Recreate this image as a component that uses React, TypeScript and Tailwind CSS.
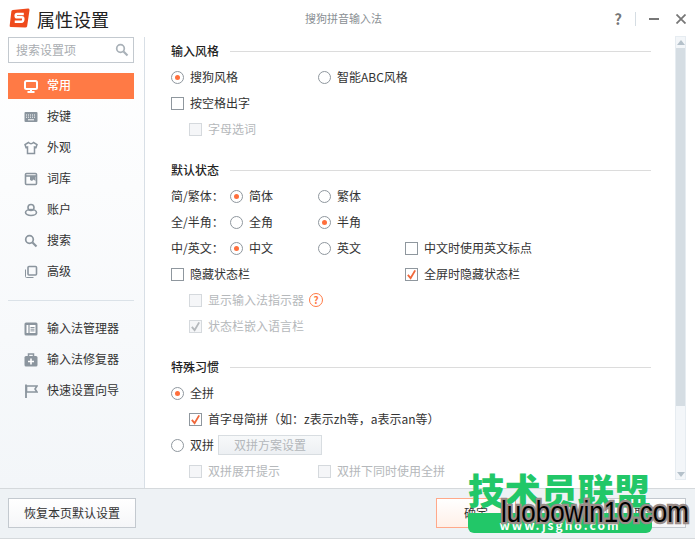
import type { ReactNode } from "react";

function Radio({ on = false }: { on?: boolean }) {
  return (
    <span className="flex h-[13px] w-[13px] shrink-0 items-center justify-center rounded-full border border-[#8f979e] bg-white">
      {on && <span className="h-[5px] w-[5px] rounded-full bg-[#ff6f3c]" />}
    </span>
  );
}

function Check({ on = false, off = false }: { on?: boolean; off?: boolean }) {
  return (
    <span
      className={`flex h-[13px] w-[13px] shrink-0 items-center justify-center border ${
        off ? "border-[#d5d9dd] bg-[#f5f6f8]" : "border-[#8f979e] bg-white"
      }`}
    >
      {on && (
        <svg viewBox="0 0 12 12" className="h-[11px] w-[11px]">
          <path d="M2 6.5 L5 10 L10 1.5" fill="none" stroke={off ? "#b4b8bc" : "#f0673a"} strokeWidth="2" />
        </svg>
      )}
    </span>
  );
}

function RadioOpt({ on, label, w }: { on?: boolean; label: string; w: string }) {
  return (
    <div className={`flex items-center gap-[6px] ${w}`}>
      <Radio on={on} />
      <span>{label}</span>
    </div>
  );
}

function CheckOpt({ on, off, label, w }: { on?: boolean; off?: boolean; label: string; w?: string }) {
  return (
    <div className={`flex items-center gap-[6px] ${w ?? ""} ${off ? "text-[#b5b8bb]" : ""}`}>
      <Check on={on} off={off} />
      <span>{label}</span>
    </div>
  );
}

function Row({ children, indent }: { children: ReactNode; indent?: string }) {
  return <div className={`flex h-[26px] items-center ${indent ?? ""}`}>{children}</div>;
}

function Heading({ title }: { title: string }) {
  return (
    <div className="flex h-[26px] items-center gap-[11px] font-medium text-[#222]">
      <span>{title}</span>
      <span className="h-px flex-1 bg-[#dcdcdc]" />
    </div>
  );
}

function NavIcon({ name, color = "#8b959e" }: { name: string; color?: string }) {
  const shapes: Record<string, ReactNode> = {
    monitor: (
      <>
        <rect x="1" y="2" width="12" height="8" rx="1.5" fill="none" stroke={color} strokeWidth="2" />
        <path d="M7 10v2M3.5 13h7" stroke={color} strokeWidth="2" />
      </>
    ),
    keyboard: (
      <>
        <rect x="0.5" y="2" width="13" height="10" rx="1" fill={color} />
        <path d="M2 5h10M2 7.2h10" stroke="#fff" strokeWidth="1" strokeDasharray="1 1" />
        <path d="M4 9.8h6" stroke="#fff" strokeWidth="1" />
      </>
    ),
    shirt: (
      <path
        d="M4.5 1.5 L1 3.5 L2 6.5 L3.5 6 V12.5 H10.5 V6 L12 6.5 L13 3.5 L9.5 1.5 Q7 4 4.5 1.5Z"
        fill="none"
        stroke={color}
        strokeWidth="1.5"
      />
    ),
    book: (
      <>
        <rect x="1.5" y="1.5" width="11" height="11" rx="1" fill="none" stroke={color} strokeWidth="1.6" />
        <path d="M1.5 4h11" stroke={color} strokeWidth="1.6" />
        <path d="M6 4h5.5v5l-2-1.5-1.5 1.5-2-1z" fill={color} />
      </>
    ),
    user: (
      <>
        <circle cx="7" cy="4.5" r="3" fill="none" stroke={color} strokeWidth="1.6" />
        <ellipse cx="7" cy="9.5" rx="5.5" ry="3" fill="none" stroke={color} strokeWidth="1.6" />
      </>
    ),
    search: (
      <>
        <circle cx="5.5" cy="5.5" r="3.8" fill="none" stroke={color} strokeWidth="1.7" />
        <path d="M8.5 8.5 L12.5 12.5" stroke={color} strokeWidth="2.2" />
      </>
    ),
    copy: (
      <>
        <rect x="4" y="1.5" width="8.5" height="8.5" rx="1" fill="none" stroke={color} strokeWidth="1.6" />
        <path d="M1.5 4.5v7a1 1 0 0 0 1 1h7" fill="none" stroke={color} strokeWidth="1" />
      </>
    ),
    manager: (
      <>
        <rect x="0.5" y="0.5" width="13" height="13" rx="1.5" fill={color} />
        <rect x="2.5" y="3" width="9" height="8" fill="#fff" />
        <path d="M5 3v8" stroke={color} strokeWidth="1.2" />
        <path d="M6.5 5.5h4M6.5 7.2h4M6.5 8.9h4" stroke={color} strokeWidth="1" />
      </>
    ),
    repair: (
      <>
        <rect x="0.5" y="3" width="13" height="10.5" rx="1.5" fill={color} />
        <path d="M4.5 3V1h5v2" fill="none" stroke={color} strokeWidth="1.5" />
        <path d="M7 5.5v6M4 8.5h6" stroke="#fff" strokeWidth="1.6" />
      </>
    ),
    flag: (
      <>
        <path d="M2 0.5V14" stroke={color} strokeWidth="1.8" />
        <path d="M2.5 2H13L11 5l2 3H2.5z" fill="none" stroke={color} strokeWidth="1.6" />
      </>
    ),
  };
  return (
    <svg viewBox="0 0 14 14" className="h-[14px] w-[14px] shrink-0">
      {shapes[name]}
    </svg>
  );
}

function NavItem({ icon, label, active }: { icon: string; label: string; active?: boolean }) {
  return (
    <div
      className={`ml-2 flex h-[26px] w-[126px] items-center gap-[9px] pl-[16px] ${
        active ? "bg-[#ff7a45] font-medium text-white" : "text-[#333]"
      }`}
    >
      <NavIcon name={icon} color={active ? "#ffffff" : "#8b959e"} />
      <span className="mb-[2px]">{label}</span>
    </div>
  );
}

function Gap() {
  return <div className="h-[15px]" />;
}

export default function App() {
  return (
    <div className="relative flex h-[539px] w-[695px] flex-col overflow-hidden bg-white font-['Noto_Sans_CJK_SC','Noto_Sans',sans-serif] text-[12px] leading-none text-[#333]">
      {/* title bar */}
      <div className="flex h-[37px] shrink-0 items-center">
        <svg viewBox="0 0 22 22" className="ml-[9px] h-[21px] w-[21px] shrink-0">
          <path d="M4 2 L20 0.5 Q21.5 0.5 21.5 2 L19 19 Q18.7 20.5 17 20.5 L2 20 Q0.5 20 0.7 18.5 L2.5 3.5 Q2.6 2.2 4 2Z" fill="#ef4a1c" />
          <path d="M15.5 6.2 H8.5 Q7 6.2 7 8 Q7 9.7 8.5 9.7 H13.5 Q15 9.7 15 11.6 Q15 14.5 13 14.5 H6" fill="none" stroke="#fff" strokeWidth="2.6" />
        </svg>
        <span className="ml-[7px] w-[268px] text-[18px] text-[#222]">属性设置</span>
        <span className="text-[11px] text-[#8a8f94]">搜狗拼音输入法</span>
        <div className="ml-auto flex items-center text-[#777]">
          <span className="w-[18px] text-center text-[15px] font-bold">?</span>
          <span className="ml-[8px] mr-[13px] h-[14px] w-px bg-[#d5dde3]" />
          <span className="h-[2px] w-[10px] bg-[#777]" />
          <svg viewBox="0 0 10 10" className="ml-[17px] mr-[9px] h-[10px] w-[10px]">
            <path d="M0.5 0.5 L9.5 9.5 M9.5 0.5 L0.5 9.5" stroke="#777" strokeWidth="1.8" />
          </svg>
        </div>
      </div>

      <div className="flex min-h-0 flex-1">
        {/* sidebar */}
        <div className="flex w-[145px] shrink-0 flex-col border-r border-[#d8dfe6] bg-gradient-to-b from-white to-[#f3f6f9]">
          <div className="ml-2 flex h-[26px] w-[126px] items-center justify-between border border-[#c3c9cf] bg-white pl-[7px] pr-[4px] text-[#a9adb1]">
            <span>搜索设置项</span>
            <NavIcon name="search" color="#a9b1b8" />
          </div>
          <div className="h-[10px]" />
          <NavItem icon="monitor" label="常用" active />
          <div className="mt-[5px] flex flex-col gap-[5px]">
            <NavItem icon="keyboard" label="按键" />
            <NavItem icon="shirt" label="外观" />
            <NavItem icon="book" label="词库" />
            <NavItem icon="user" label="账户" />
            <NavItem icon="search" label="搜索" />
            <NavItem icon="copy" label="高级" />
          </div>
          <div className="mx-2 mb-[15px] mt-[15px] h-px w-[126px] bg-[#dbe2e8]" />
          <div className="flex flex-col gap-[5px]">
            <NavItem icon="manager" label="输入法管理器" />
            <NavItem icon="repair" label="输入法修复器" />
            <NavItem icon="flag" label="快速设置向导" />
          </div>
        </div>

        {/* settings */}
        <div className="flex min-w-0 flex-1">
          <div className="min-w-0 flex-1 pl-[26px] pr-[24px] pt-px">
            <Heading title="输入风格" />
            <Row>
              <RadioOpt on label="搜狗风格" w="w-[147px]" />
              <RadioOpt label="智能ABC风格" w="w-[120px]" />
            </Row>
            <Row>
              <CheckOpt label="按空格出字" />
            </Row>
            <Row indent="pl-[18px]">
              <CheckOpt off label="字母选词" />
            </Row>
            <Gap />
            <Heading title="默认状态" />
            <Row>
              <span className="w-[59px]">简/繁体：</span>
              <RadioOpt on label="简体" w="w-[88px]" />
              <RadioOpt label="繁体" w="w-[87px]" />
            </Row>
            <Row>
              <span className="w-[59px]">全/半角：</span>
              <RadioOpt label="全角" w="w-[88px]" />
              <RadioOpt on label="半角" w="w-[87px]" />
            </Row>
            <Row>
              <span className="w-[59px]">中/英文：</span>
              <RadioOpt on label="中文" w="w-[88px]" />
              <RadioOpt label="英文" w="w-[87px]" />
              <CheckOpt label="中文时使用英文标点" />
            </Row>
            <Row>
              <CheckOpt label="隐藏状态栏" w="w-[234px]" />
              <CheckOpt on label="全屏时隐藏状态栏" />
            </Row>
            <Row indent="pl-[18px]">
              <CheckOpt off label="显示输入法指示器" />
              <span className="ml-[5px] flex h-[14px] w-[14px] items-center justify-center rounded-full border-[1.5px] border-[#ff7a45] text-[10px] font-bold text-[#ff7a45]">
                ?
              </span>
            </Row>
            <Row indent="pl-[18px]">
              <CheckOpt on off label="状态栏嵌入语言栏" />
            </Row>
            <Gap />
            <Heading title="特殊习惯" />
            <Row>
              <RadioOpt on label="全拼" w="w-[60px]" />
            </Row>
            <Row indent="pl-[18px]">
              <CheckOpt on label="首字母简拼（如：z表示zh等，a表示an等）" />
            </Row>
            <Row>
              <RadioOpt label="双拼" w="w-[47px]" />
              <span className="flex h-[20px] w-[104px] items-center justify-center border border-[#d8dde1] bg-gradient-to-b from-[#f7f9fa] to-[#edf0f3] text-[#b3b7bb]">
                双拼方案设置
              </span>
            </Row>
            <Row indent="pl-[18px]">
              <CheckOpt off label="双拼展开提示" w="w-[129px]" />
              <CheckOpt off label="双拼下同时使用全拼" />
            </Row>
          </div>

          {/* scrollbar */}
          <div className="mr-[9px] mt-[-1px] flex h-[444px] w-[11px] shrink-0 flex-col border border-[#e6ecf1] bg-[#f3f6f9]">
            <div className="flex h-[11px] shrink-0 items-center justify-center">
              <span className="h-0 w-0 border-x-[4px] border-b-[5px] border-x-transparent border-b-[#b5c1ca]" />
            </div>
            <div className="h-[358px] bg-[#d5dde3]" />
            <div className="mt-auto flex h-[9px] shrink-0 items-center justify-center">
              <span className="h-0 w-0 border-x-[4px] border-t-[5px] border-x-transparent border-t-[#b5c1ca]" />
            </div>
          </div>
        </div>
      </div>

      {/* footer */}
      <div className="flex h-[51px] shrink-0 items-start border-y border-[#d5d9dc] bg-[#eef2f5] pl-2 pr-[9px] pt-[9px]">
        <button className="h-[30px] w-[128px] border border-[#c3c9cf] bg-gradient-to-b from-white to-[#f5f6f8] text-[12px] text-[#333]">
          恢复本页默认设置
        </button>
        <button className="ml-[300px] h-[30px] w-[80px] border border-[#ffa98a] bg-gradient-to-b from-white to-[#fff0e8] text-[12px] text-[#333]">
          确定
        </button>
        <button className="ml-auto h-[30px] w-[80px] border border-[#c3c9cf] bg-gradient-to-b from-white to-[#f5f6f8] text-[12px] text-[#333]">
          取消
        </button>
      </div>

      {/* watermark */}
      <div className="pointer-events-none absolute left-[468px] top-[468px] h-[66px] w-[227px]">
        <div className="absolute left-0 top-[3px] whitespace-nowrap text-[36.5px] font-black leading-[38px] text-[#22c768]">
          技术员联盟
        </div>
        <div className="absolute left-0 top-[45px] flex h-[20px] w-[184px] items-end justify-center rounded-b-[6px] rounded-t-[2px] bg-[#22c768] pb-[2px] text-[12px] font-bold tracking-[2px] text-white">
          www.jsgho.com
        </div>
        <div className="absolute left-[33px] top-[29px] origin-center scale-y-[1.12] whitespace-nowrap font-['Liberation_Sans',sans-serif] text-[26px] leading-[30px] text-black [-webkit-text-stroke:4px_#998c88] [paint-order:stroke_fill]">
          luobowin10.com
        </div>
      </div>
    </div>
  );
}
